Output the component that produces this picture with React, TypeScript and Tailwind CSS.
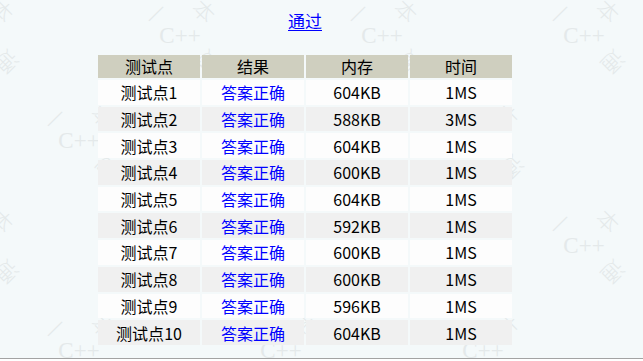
const rows = [
  { id: 1, mem: "604KB", time: "1MS" },
  { id: 2, mem: "588KB", time: "3MS" },
  { id: 3, mem: "604KB", time: "1MS" },
  { id: 4, mem: "600KB", time: "1MS" },
  { id: 5, mem: "604KB", time: "1MS" },
  { id: 6, mem: "592KB", time: "1MS" },
  { id: 7, mem: "600KB", time: "1MS" },
  { id: 8, mem: "600KB", time: "1MS" },
  { id: 9, mem: "596KB", time: "1MS" },
  { id: 10, mem: "604KB", time: "1MS" },
];

// watermark stamp centres ("C++" in the middle, 一本通 around it);
// the ones sitting wholly under the table are skipped
const stamps: [number, number][] = [];
for (let j = -1; j < 4; j++) {
  const y = 35 + j * 105;
  const x0 = j % 2 === 0 ? 180 : 79;
  for (let k = -1; k < 4; k++) {
    const x = x0 + k * 202;
    const hidden = x - 40 > 98 && x + 45 < 512 && y - 40 > 55 && y + 45 < 345;
    if (!hidden) stamps.push([x, y]);
  }
}

function Stamp({ x, y }: { x: number; y: number }) {
  const cjk = "'Noto Sans CJK SC', sans-serif";
  return (
    <g transform={`translate(${x} ${y})`} fill="#e4e9ea">
      <text x="0" y="8" textAnchor="middle" fontSize="23" fontFamily="'Liberation Serif', serif">
        C++
      </text>
      <text transform="translate(-25 -22) rotate(-45)" textAnchor="middle" dominantBaseline="central" fontSize="22" fontFamily={cjk} fontWeight="300">
        一
      </text>
      <text transform="translate(25 -25) rotate(45)" textAnchor="middle" dominantBaseline="central" fontSize="22" fontFamily={cjk} fontWeight="300">
        本
      </text>
      <text transform="translate(30 28) rotate(135)" textAnchor="middle" dominantBaseline="central" fontSize="22" fontFamily={cjk} fontWeight="300">
        通
      </text>
    </g>
  );
}

function Watermark() {
  return (
    <svg className="absolute inset-0 h-full w-full" aria-hidden="true">
      {stamps.map(([x, y], i) => (
        <Stamp key={i} x={x} y={y} />
      ))}
    </svg>
  );
}

export default function App() {
  return (
    <div
      className="relative h-[361px] w-[643px] overflow-hidden bg-white"
      style={{ fontFamily: "'Noto Sans CJK SC', 'Microsoft YaHei', sans-serif" }}
    >
      <div className="relative h-[359px] overflow-hidden border-b border-[#a3a3a3] bg-[#f4f9fa]">
        <Watermark />
        <div className="relative ml-[96px] flex w-[418px] flex-col items-center">
          <a href="#" className="mt-[9px] text-[17px] leading-[24px] text-[#0000ff] underline underline-offset-2">
            通过
          </a>
          <table className="mt-[20px] border-separate border-spacing-[2px] text-[16px] text-black">
            <thead>
              <tr className="h-[23px] bg-[#cfcfbf]">
                <th className="w-[102px] p-0 text-center font-normal leading-[23px]">测试点</th>
                <th className="w-[102px] p-0 text-center font-normal leading-[23px]">结果</th>
                <th className="w-[102px] p-0 text-center font-normal leading-[23px]">内存</th>
                <th className="w-[102px] p-0 text-center font-normal leading-[23px]">时间</th>
              </tr>
            </thead>
            <tbody>
              {rows.map((r) => (
                <tr key={r.id} className={r.id % 2 === 0 ? "h-[24.7px] bg-[#f0f0f0]" : "h-[24.7px] bg-[#fdfdfd]"}>
                  <td className="p-0 text-center leading-[24px]">测试点{r.id}</td>
                  <td className="p-0 text-center leading-[24px] text-[#0000ff]">答案正确</td>
                  <td className="p-0 text-center leading-[24px]">{r.mem}</td>
                  <td className="p-0 text-center leading-[24px]">{r.time}</td>
                </tr>
              ))}
            </tbody>
          </table>
        </div>
      </div>
    </div>
  );
}
